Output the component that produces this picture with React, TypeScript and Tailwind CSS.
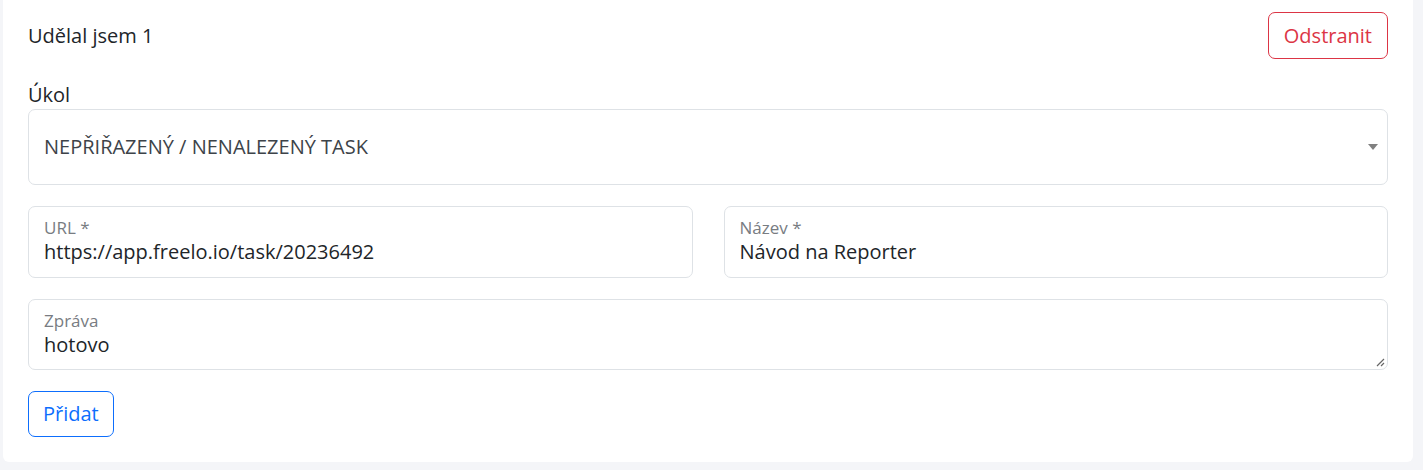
import React from "react";

const App: React.FC = () => {
  return (
    <div
      className="min-h-[470px] w-full bg-[#f4f5f8] pl-[3px] pr-[10px]"
      style={{ fontFamily: '"Open Sans", "Noto Sans", sans-serif' }}
    >
      <div className="rounded-b-[6px] bg-white px-[25px] pb-[25px] pt-[12px] text-[#212529]">
        <div className="flex items-center justify-between">
          <div className="text-[20px]">Udělal jsem 1</div>
          <button className="h-[47px] rounded-[7px] border border-[#dc3545] px-[15px] text-[20px] text-[#dc3545]">
            Odstranit
          </button>
        </div>

        <div className="mt-[22px] text-[20px] leading-[28px]">Úkol</div>
        <div className="relative flex h-[76px] items-center rounded-[7px] border border-[#dee2e6] px-[15px] text-[20px] text-[#3d4349]">
          NEPŘIŘAZENÝ / NENALEZENÝ TASK
          <svg
            className="absolute right-[9px] top-[34px]"
            width="10"
            height="6"
            viewBox="0 0 10 6"
          >
            <path d="M0 0h10L5 6z" fill="#808080" />
          </svg>
        </div>

        <div className="mt-[21px] grid grid-cols-2 gap-[31px]">
          <Field label="URL *" value="https://app.freelo.io/task/20236492" />
          <Field label="Název *" value="Návod na Reporter" />
        </div>

        <div className="relative mt-[21px] h-[71px] rounded-[7px] border border-[#dee2e6] px-[15px] pt-[11px]">
          <div className="text-[17px] leading-[20px] text-[#787c82]">Zpráva</div>
          <div className="text-[20px] leading-[27px]">hotovo</div>
          <svg
            className="absolute bottom-[2px] right-[2px]"
            width="9"
            height="9"
            viewBox="0 0 9 9"
          >
            <path d="M8 1L1 8M8 5L5 8" stroke="#666" strokeWidth="1.2" />
          </svg>
        </div>

        <button className="mt-[21px] h-[46px] rounded-[7px] border border-[#0d6efd] px-[14px] text-[20px] text-[#0d6efd]">
          Přidat
        </button>
      </div>
    </div>
  );
};

const Field: React.FC<{ label: string; value: string }> = ({ label, value }) => (
  <div className="h-[72px] rounded-[7px] border border-[#dee2e6] px-[15px] pt-[11px]">
    <div className="text-[17px] leading-[20px] text-[#787c82]">{label}</div>
    <div className="text-[20px] leading-[28px]">{value}</div>
  </div>
);

export default App;
